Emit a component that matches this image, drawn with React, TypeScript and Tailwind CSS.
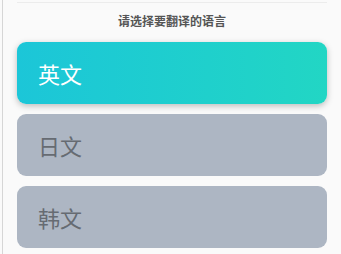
const font = { fontFamily: '"Noto Sans CJK SC", "Noto Sans", sans-serif' };

const languages = [
  { name: "英文", active: true },
  { name: "日文", active: false },
  { name: "韩文", active: false },
];

export default function App() {
  return (
    <div className="w-[341px] h-[254px] bg-[#fafafa] overflow-hidden" style={font}>
      <div className="h-full ml-[2px] border-l border-[#d6d6d6] pl-[14px] pr-[14px]">
        <div className="h-[2px]" />
        <div className="border-t border-[#ececec]" />
        <div className="h-[36px] flex items-center justify-center text-[12px] font-bold text-[#555]">
          请选择要翻译的语言
        </div>
        <div className="flex flex-col gap-[10px] pt-[3px]">
          {languages.map((lang) => (
            <div
              key={lang.name}
              className={
                lang.active
                  ? "h-[62px] rounded-[9px] flex items-center pl-[21px] text-[22px] text-white bg-gradient-to-r from-[#1cc6d8] to-[#22d6c4] shadow-[0_2px_6px_rgba(0,0,0,0.25)]"
                  : "h-[62px] rounded-[9px] flex items-center pl-[21px] text-[22px] text-[#666b72] bg-[#adb6c3]"
              }
            >
              {lang.name}
            </div>
          ))}
        </div>
      </div>
    </div>
  );
}
